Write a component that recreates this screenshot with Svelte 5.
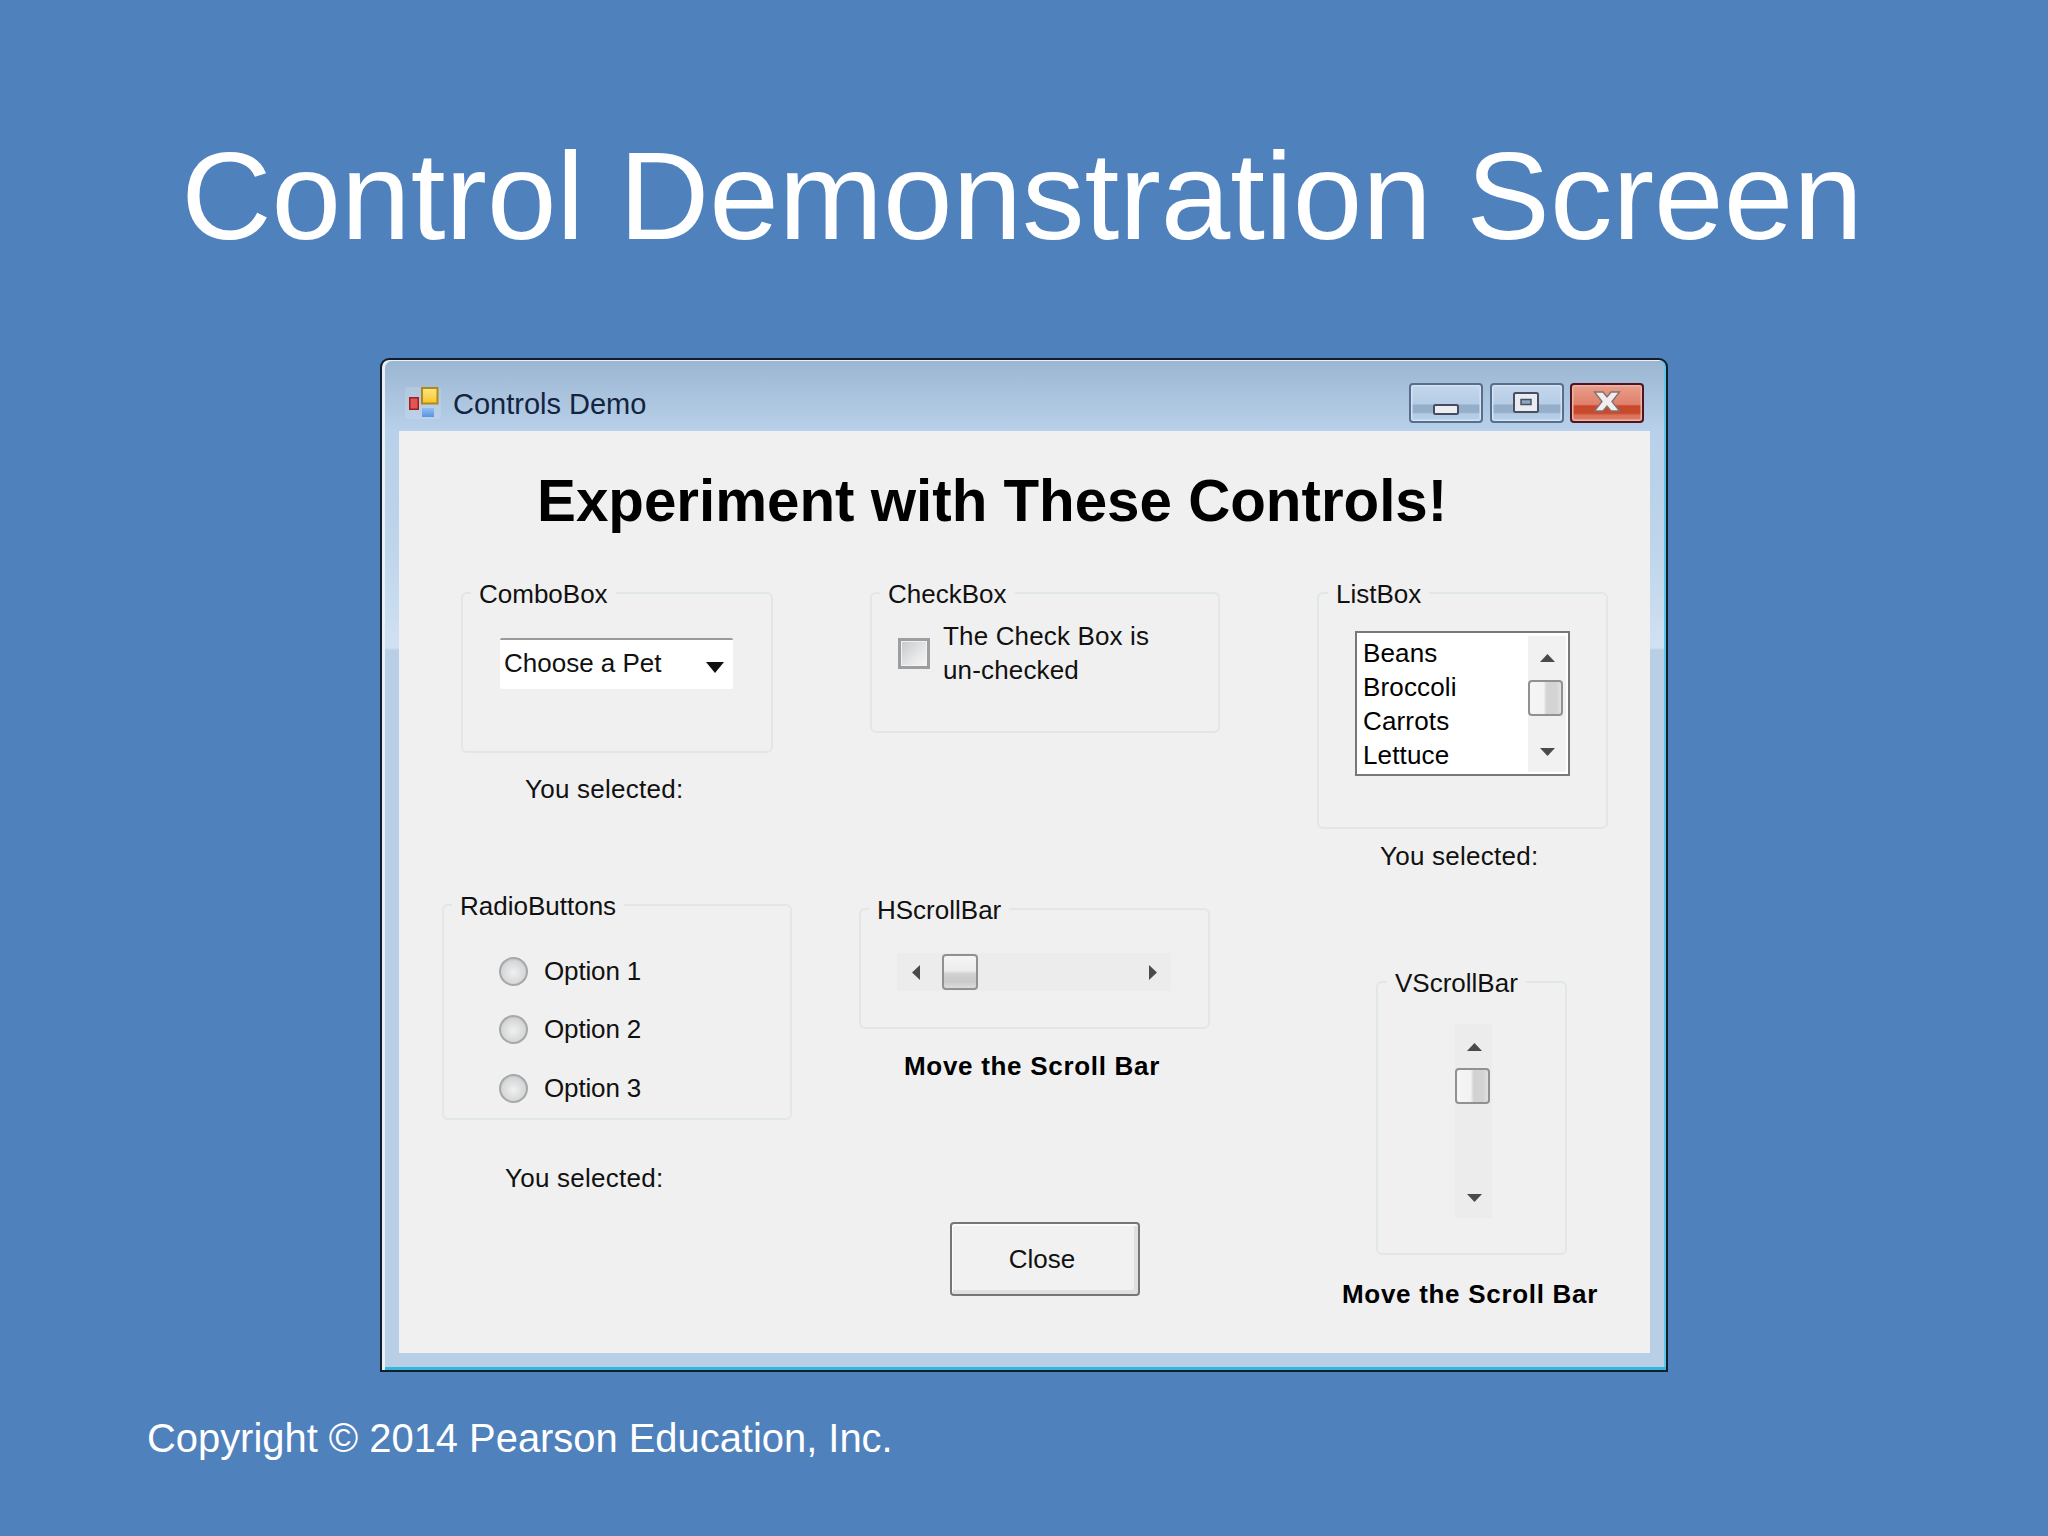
<script>
  const radioOptions = ['Option 1', 'Option 2', 'Option 3']
  const vegetables = ['Beans', 'Broccoli', 'Carrots', 'Lettuce']

  const upPoints = '0,8 15,8 7.500,0'
  const downPoints = '0,0 15,0 7.500,8'
  const leftPoints = '8,0 8,15 0,7.500'
  const rightPoints = '0,0 0,15 8,7.500'
</script>

{#snippet arrow(w, h, points)}
  <svg class="arrow" width={w} height={h} viewBox="0 0 {w} {h}"><polygon {points} /></svg>
{/snippet}

<div class="slide">
  <h1>Control Demonstration Screen</h1>

  <div class="window">
    <div class="titlebar">
      <svg class="app-icon" width="36" height="32" viewBox="0 0 36 32">
        <defs>
          <linearGradient id="icon-yellow" x1="0" y1="0" x2="0" y2="1">
            <stop offset="0" stop-color="#ffe680" />
            <stop offset="1" stop-color="#f6c52c" />
          </linearGradient>
          <linearGradient id="icon-blue" x1="0" y1="0" x2="0" y2="1">
            <stop offset="0" stop-color="#93bdf2" />
            <stop offset="1" stop-color="#5a92e2" />
          </linearGradient>
        </defs>
        <rect width="36" height="32" rx="3" fill="#fff" fill-opacity="0.13" />
        <rect x="4.750" y="10.750" width="8.500" height="11.500" fill="#e25555" stroke="#a51a1a" stroke-width="1.500" />
        <rect x="17" y="1" width="15.500" height="15.500" fill="url(#icon-yellow)" stroke="#ad8a1f" stroke-width="2" />
        <rect x="17" y="21" width="12" height="9" fill="url(#icon-blue)" />
      </svg>
      <span class="window-title">Controls Demo</span>
      <div class="window-buttons">
        <button class="wbtn">
          <svg width="26" height="11" viewBox="0 0 26 11"><rect x="1" y="1" width="24" height="9" rx="1.500" fill="#eceef2" stroke="#454b60" stroke-width="2" /></svg>
        </button>
        <button class="wbtn">
          <svg width="26" height="21" viewBox="0 0 26 21"><rect x="1" y="1" width="24" height="19" rx="1.500" fill="#e8ecf0" stroke="#4a4f60" stroke-width="2" /><rect x="8" y="7.500" width="10" height="5" fill="#8da5c0" stroke="#4a4f60" stroke-width="1.500" /></svg>
        </button>
        <button class="wbtn wbtn-close">
          <svg width="28" height="21" viewBox="0 0 28 21"><path d="M1.500 1 L10 1 L14 6 L18 1 L26.500 1 L19 10.500 L26.500 20 L18 20 L14 15 L10 20 L1.500 20 L9 10.500 Z" fill="#f0eeee" stroke="#85706e" stroke-width="1.400" /></svg>
        </button>
      </div>
    </div>

    <div class="client">
      <div class="heading">Experiment with These Controls!</div>

      <div class="columns">
        <div class="col">
          <fieldset class="group combo-group">
            <legend>ComboBox</legend>
            <div class="combo">
              <span>Choose a Pet</span>
              <svg width="18" height="11" viewBox="0 0 18 11"><polygon points="0,0 18,0 9,11" fill="#111" /></svg>
            </div>
          </fieldset>
          <div class="note combo-note">You selected:</div>

          <fieldset class="group radio-group">
            <legend>RadioButtons</legend>
            <div class="radios">
              {#each radioOptions as option}
                <div class="radio-row">
                  <span class="radio"></span>
                  <span>{option}</span>
                </div>
              {/each}
            </div>
          </fieldset>
          <div class="note radio-note">You selected:</div>
        </div>

        <div class="col">
          <fieldset class="group check-group">
            <legend>CheckBox</legend>
            <div class="check-row">
              <span class="checkbox"></span>
              <span class="check-label">The Check Box is<br />un-checked</span>
            </div>
          </fieldset>

          <fieldset class="group hscroll-group">
            <legend>HScrollBar</legend>
            <div class="hscroll">
              <span class="hleft">{@render arrow(8, 15, leftPoints)}</span>
              <span class="thumb thumb-h"></span>
              <span class="hright">{@render arrow(8, 15, rightPoints)}</span>
            </div>
          </fieldset>
          <div class="note bold hscroll-note">Move the Scroll Bar</div>

          <button class="close-btn">Close</button>
        </div>

        <div class="col">
          <fieldset class="group list-group">
            <legend>ListBox</legend>
            <div class="listbox">
              <div class="items">
                {#each vegetables as item}
                  <div>{item}</div>
                {/each}
              </div>
              <div class="list-scroll">
                <span class="list-up">{@render arrow(15, 8, upPoints)}</span>
                <span class="thumb thumb-v"></span>
                <span class="list-down">{@render arrow(15, 8, downPoints)}</span>
              </div>
            </div>
          </fieldset>
          <div class="note list-note">You selected:</div>

          <fieldset class="group vscroll-group">
            <legend>VScrollBar</legend>
            <div class="vscroll">
              <span class="v-up">{@render arrow(15, 8, upPoints)}</span>
              <span class="thumb thumb-v"></span>
              <span class="v-down">{@render arrow(15, 8, downPoints)}</span>
            </div>
          </fieldset>
          <div class="note bold vscroll-note">Move the Scroll Bar</div>
        </div>
      </div>
    </div>
  </div>

  <div class="copyright">Copyright © 2014 Pearson Education, Inc.</div>
</div>

<style>
:global(body) {
  margin: 0;
  background: #4f81bd;
}

.slide {
  width: 2048px;
  height: 1536px;
  background: #4f81bd;
  font-family: "Liberation Sans", Arial, sans-serif;
  display: flex;
  flex-direction: column;
  overflow: hidden;
}

h1 {
  margin: 126px 0 0;
  padding-right: 4px;
  height: 140px;
  line-height: 140px;
  font-size: 125px;
  font-weight: 400;
  color: #fff;
  text-align: center;
}

.window {
  align-self: center;
  margin-top: 92px;
  width: 1288px;
  height: 1014px;
  box-sizing: border-box;
  border: 2px solid #141d28;
  border-radius: 9px 9px 0 0;
  background: linear-gradient(to bottom, #9bb6d2 0, #b8d0e9 70px, #bdd4ea 180px, #d0e1f2 288px, #b8cfe6 290px, #b8cfe6 100%);
  box-shadow: inset 3px 1px 0 #e9f1f8, inset 0 -3px 0 #35b6df, inset -2px 0 0 #5ec6e8;
  display: flex;
  flex-direction: column;
  padding: 0 16px 17px 17px;
}

.titlebar {
  height: 71px;
  flex: none;
  box-sizing: border-box;
  padding: 15px 6px 0 6px;
  display: flex;
  align-items: center;
}

.app-icon {
  flex: none;
}

.window-title {
  margin: 2px 0 0 12px;
  font-size: 29px;
  color: #14233f;
}

.window-buttons {
  margin-left: auto;
  display: flex;
  gap: 6.500px;
}

.wbtn {
  width: 74px;
  height: 40px;
  padding: 0;
  border: 2px solid #586e8e;
  border-radius: 4px;
  background: linear-gradient(to bottom, #c3d7ec 0, #b6cde5 52%, #95afca 56%, #95afca 76%, #b4cbe4 80%, #b8cfe7 100%);
  box-shadow: inset 0 0 0 1.500px #d5e2ef;
  display: flex;
  align-items: center;
  justify-content: center;
}

.wbtn:first-child svg {
  margin-top: 12px;
}

.wbtn:nth-child(2) svg {
  margin-top: -1px;
  margin-right: 2px;
}

.wbtn-close {
  border-color: #4d1423;
  background: linear-gradient(to bottom, #ea9f8b 0, #df806c 54%, #c8492c 58%, #c8492c 78%, #d97158 84%, #df7f68 100%);
  box-shadow: inset 0 0 0 1.500px #f0b4a5;
}

.wbtn-close svg {
  margin-top: -3px;
}

.client {
  flex: 1;
  background: #f0f0f0;
  padding: 35px 0 0 43px;
  font-size: 26px;
  color: #111;
}

.heading {
  margin-left: 95px;
  height: 70px;
  line-height: 70px;
  font-size: 58.300px;
  font-weight: 700;
  color: #000;
}

.columns {
  margin-top: 44px;
  display: grid;
  grid-template-columns: 418px 458px 1fr;
}

.col {
  display: flex;
  flex-direction: column;
  align-items: flex-start;
}

.group {
  margin: 0;
  padding: 0;
  box-sizing: border-box;
  min-width: 0;
  border: 2px solid #e1e6e8;
  border-radius: 6px;
}

legend {
  margin-left: 8px;
  padding: 0 8px;
  box-sizing: border-box;
  height: 26px;
  line-height: 28px;
  font-size: 26px;
}

.list-group legend,
.vscroll-group legend {
  margin-left: 9px;
}

.note {
  height: 30px;
  line-height: 28px;
  letter-spacing: 0.250px;
  white-space: nowrap;
}

.note.bold {
  line-height: 30px;
  font-weight: 700;
  letter-spacing: 0.700px;
  color: #000;
}

/* combo box */
.combo-group {
  margin-left: 19px;
  width: 312px;
  height: 173px;
}

.combo {
  margin: 32px 0 0 37px;
  width: 233px;
  height: 51px;
  box-sizing: border-box;
  background: #fff;
  border-top: 2px solid #9a9a9a;
  border-radius: 2px;
  padding: 0 9.500px 2px 4px;
  display: flex;
  align-items: center;
  justify-content: space-between;
}

.combo svg {
  margin-top: 7px;
}

.combo-note {
  margin: 22px 0 0 83px;
}

/* radio buttons */
.radio-group {
  margin-top: 87px;
  width: 350px;
  height: 228px;
}

.radios {
  margin: 38px 0 0 55px;
  display: flex;
  flex-direction: column;
  gap: 28.500px;
}

.radio-row {
  height: 30px;
  display: flex;
  align-items: center;
  gap: 16px;
  letter-spacing: -0.150px;
}

.radio {
  width: 29px;
  height: 29px;
  box-sizing: border-box;
  border: 2px solid #a6a8aa;
  border-radius: 50%;
  background: radial-gradient(circle at 50% 55%, #f0f0f0 0, #d6d7d8 62%, #c9cacb 72%, #f4f4f4 78%, #f4f4f4 100%);
}

.radio-note {
  margin: 44px 0 0 63px;
}

/* check box */
.check-group {
  margin-left: 10px;
  width: 350px;
  height: 153px;
}

.check-row {
  margin: 13px 0 0 26px;
  display: flex;
  gap: 13px;
}

.checkbox {
  margin-top: 19px;
  flex: none;
  width: 32px;
  height: 31px;
  box-sizing: border-box;
  border: 3px solid #9c9e9f;
  background: linear-gradient(135deg, #c6c8ca 0, #e6e7e8 60%, #f6f6f6 100%);
  box-shadow: inset 0 0 0 1px #f2f2f2;
}

.check-label {
  line-height: 34px;
  letter-spacing: 0.150px;
}

/* scroll bars */
.thumb {
  display: block;
  flex: none;
  box-sizing: border-box;
  border: 2px solid #909192;
  border-radius: 4px;
}

.thumb-h {
  width: 36px;
  height: 36px;
  background: linear-gradient(to bottom, #f5f5f5 0, #ececec 46%, #d0d0d0 56%, #c9c9c9 80%, #dcdcdc 100%);
}

.thumb-v {
  width: 35px;
  height: 36px;
  background: linear-gradient(to right, #f6f6f6 0, #f2f2f2 44%, #d2d2d2 54%, #d4d4d4 85%, #e2e2e2 100%);
}

.arrow {
  display: block;
  flex: none;
}

.arrow polygon {
  fill: #4a4a4a;
}

.hscroll-group {
  margin: 163px 0 0 -1px;
  width: 351px;
  height: 133px;
}

.hscroll {
  margin: 31px 0 0 36px;
  width: 274px;
  height: 38px;
  background: #ececed;
  display: flex;
  align-items: center;
}

.hleft {
  margin-left: 15px;
  width: 29.500px;
}

.hright {
  margin-left: auto;
  margin-right: 14px;
}

.hscroll-note {
  margin: 22px 0 0 44px;
}

.close-btn {
  margin: 141px 0 0 90px;
  width: 190px;
  height: 74px;
  padding: 0 6px 0 0;
  background: #f1f1f1;
  border: 2px solid #767676;
  border-radius: 4px;
  box-shadow: inset 1px 2px 0 #fbfbfb, inset -4px -4px 0 #e0e0e0;
  font-family: inherit;
  font-size: 26px;
  color: #111;
}

/* list box */
.list-group {
  margin-left: -1px;
  width: 291px;
  height: 249px;
}

.listbox {
  margin: 25px 0 0 36px;
  width: 215px;
  height: 145px;
  box-sizing: border-box;
  border: 2px solid #787878;
  background: #fff;
  padding: 3px 0 2px 7px;
  display: flex;
  justify-content: space-between;
}

.items {
  line-height: 34px;
  margin-left: -1px;
  letter-spacing: 0.150px;
  color: #000;
}

.list-scroll {
  width: 38px;
  box-sizing: border-box;
  background: #f1f1f1;
  margin-right: 2px;
  display: flex;
  flex-direction: column;
  align-items: flex-start;
}

.list-up {
  margin: 18px 0 0 12px;
  height: 26px;
}

.list-down {
  margin: auto 0 16px 12px;
}

.list-note {
  margin: 13px 0 0 62px;
}

.vscroll-group {
  margin: 97px 0 0 58px;
  width: 191px;
  height: 286px;
}

.vscroll {
  margin: 29px 0 0 77px;
  width: 37px;
  height: 194px;
  background: #ececed;
  display: flex;
  flex-direction: column;
  align-items: flex-start;
}

.v-up {
  margin: 19px 0 0 12px;
  height: 25px;
}

.v-down {
  margin: auto 0 16px 12px;
}

.vscroll-note {
  margin: 24px 0 0 24px;
}

.copyright {
  margin: 41px 0 0 147px;
  height: 50px;
  line-height: 50px;
  font-size: 39.900px;
  color: #fff;
}
</style>
